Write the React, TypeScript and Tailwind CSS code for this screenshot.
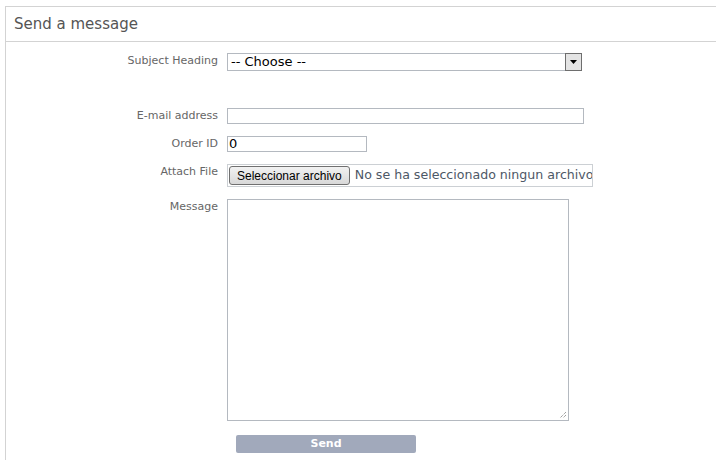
import React from 'react'

const font = { fontFamily: 'Verdana, "DejaVu Sans", sans-serif' }

function Row({ label, children, className = '' }: { label: string; children: React.ReactNode; className?: string }) {
  return (
    <div className={`flex items-start ${className}`}>
      <div className="w-[212px] shrink-0 text-right text-[11px] leading-[15px] text-[#666]">{label}</div>
      <div className="ml-[9px]">{children}</div>
    </div>
  )
}

export default function App() {
  return (
    <div className="w-[716px] h-[460px] bg-white overflow-hidden pt-[6px] pl-[5px]" style={font}>
      <div className="w-[760px] h-[470px] border-l border-t border-[#d3d3d3]">
        {/* Header */}
        <div className="h-[35px] border-b border-[#d3d3d3] pl-[8px] flex items-center">
          <h1 className="text-[15px] leading-[18px] text-[#555] pb-[1px]">Send a message</h1>
        </div>

        {/* Form */}
        <div className="pt-[11px]">
          <Row label="Subject Heading">
            <div className="w-[355px] h-[18px] border border-[#b4b9c0] flex items-center justify-between">
              <span className="pl-[3px] text-[13px] leading-[16px] text-black">-- Choose --</span>
              <div className="w-[17px] h-[18px] -mr-px border border-[#6e6e6e] bg-[#e4e4e4] flex items-center justify-center">
                <svg width="7" height="4" viewBox="0 0 7 4"><path d="M0 0h7L3.5 4z" fill="#000" /></svg>
              </div>
            </div>
          </Row>

          <Row label="E-mail address" className="mt-[37px]">
            <div className="w-[357px] h-[16px] border border-[#b4b9c0]" />
          </Row>

          <Row label="Order ID" className="mt-[12px]">
            <div className="w-[140px] h-[16px] border border-[#b4b9c0] flex items-center">
              <span className="pl-[1px] text-[13px] leading-[14px] text-black">0</span>
            </div>
          </Row>

          <Row label="Attach File" className="mt-[12px]">
            <div className="w-[366px] h-[23px] border border-[#ccd0d4] flex items-center pl-[1px] gap-[5px] overflow-hidden whitespace-nowrap">
              <div
                className="h-[19px] px-[7px] rounded-[3px] border border-[#707070] bg-gradient-to-b from-[#f2f2f2] to-[#d8d8d8] flex items-center text-[12px] text-black"
                style={{ fontFamily: '"Liberation Sans", Arial, sans-serif' }}
              >
                Seleccionar archivo
              </div>
              <span className="text-[12.6px] text-[#4d5866]">No se ha seleccionado ningun archivo</span>
            </div>
          </Row>

          <Row label="Message" className="mt-[12px]">
            <div className="relative w-[342px] h-[222px] border border-[#b4b9c0]">
              <svg className="absolute right-[1px] bottom-[1px]" width="9" height="9" viewBox="0 0 9 9">
                <path d="M8 2L2 8M8 5L5 8" stroke="#777" strokeWidth="1" strokeDasharray="1 1" />
              </svg>
            </div>
          </Row>

          <div className="mt-[14px] ml-[230px] w-[180px] h-[18px] rounded-[2px] bg-[#a1a9bb] flex items-center justify-center text-[11px] font-bold text-white">
            Send
          </div>
        </div>
      </div>
    </div>
  )
}
